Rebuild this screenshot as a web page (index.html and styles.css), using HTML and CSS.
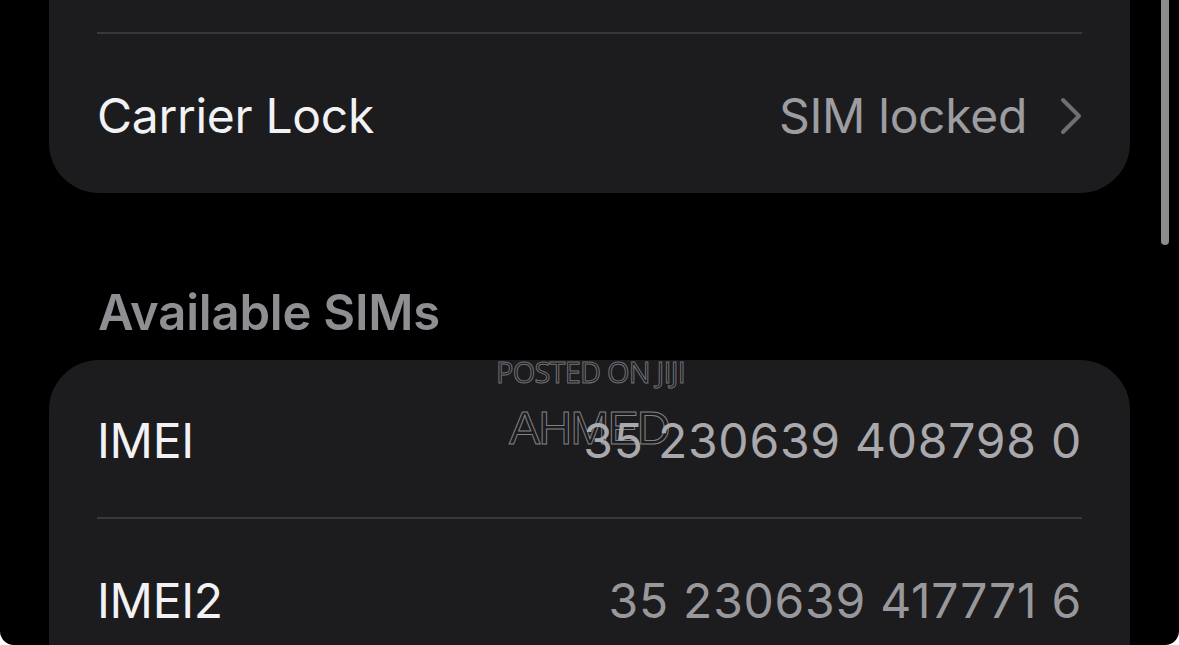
FILE: index.html
```html
<!DOCTYPE html>
<html>
<head>
<meta charset="utf-8">
<link rel="stylesheet" href="styles.css">
</head>
<body>
<div class="screen">
  <div class="card card-top">
    <div class="card-cut"></div>
    <div class="row">
      <span class="label">Carrier Lock</span>
      <span class="value value-link">SIM locked
        <svg class="chevron" width="22" height="38" viewBox="0 0 22 38"><polyline points="3,3 19,19 3,35" fill="none" stroke="#6f6f72" stroke-width="4" stroke-linecap="round" stroke-linejoin="round"/></svg>
      </span>
    </div>
  </div>
  <h2 class="section-title">Available SIMs</h2>
  <div class="card card-list">
    <div class="row row-first">
      <span class="label">IMEI</span>
      <span class="value value-num value-light">35 230639 408798 0</span>
    </div>
    <div class="row">
      <span class="label">IMEI2</span>
      <span class="value value-num">35 230639 417771 6</span>
    </div>
  </div>
  <div class="scrollbar"></div>
  <div class="watermark">
    <span class="wm-small">POSTED ON JIJI</span>
    <span class="wm-big">AHMED</span>
  </div>
</div>
</body>
</html>
```

FILE: styles.css
```css
html, body {
  margin: 0;
  padding: 0;
  background: #ffffff;
}

.screen {
  position: relative;
  width: 1179px;
  height: 645px;
  background: #000000;
  border-radius: 0 0 14px 14px;
  overflow: hidden;
  font-family: "Inter", "Liberation Sans", sans-serif;
  padding: 0 49px;
  box-sizing: border-box;
}

.card {
  background: #1c1c1e;
  width: 1081px;
}

.card-top {
  border-radius: 0 0 50px 50px;
}

.card-cut {
  height: 32px;
}

.card-list {
  border-radius: 50px 50px 0 0;
  height: 320px;
}

.row {
  margin: 0 48px;
  height: 161px;
  box-sizing: border-box;
  padding-top: 4px;
  border-top: 2px solid #38383a;
  display: flex;
  align-items: center;
  justify-content: space-between;
}

.row-first {
  border-top: none;
  height: 157px;
}

.label {
  color: #f2f2f4;
  font-size: 48px;
  letter-spacing: -0.3px;
}

.value {
  color: #98989c;
  font-size: 48px;
  letter-spacing: -0.3px;
  display: flex;
  align-items: center;
}

.value-num {
  letter-spacing: 0.75px;
}

.value-light {
  color: #a9a9ad;
}

.value-link {
  color: #9d9da1;
}

.chevron {
  margin-left: 33px;
  margin-right: 0;
}

.section-title {
  margin: 0;
  padding: 90px 0 0 49px;
  height: 77px;
  line-height: 60px;
  font-size: 49px;
  font-weight: 600;
  color: #8e8e93;
  letter-spacing: -0.2px;
}

.scrollbar {
  position: absolute;
  left: 1161px;
  top: -10px;
  width: 8px;
  height: 255px;
  border-radius: 4px;
  background: #8c8c8e;
}

.watermark {
  position: absolute;
  left: 496px;
  top: 357px;
  display: flex;
  flex-direction: column;
  align-items: flex-start;
  color: transparent;
}

.wm-small {
  font-family: "Open Sans", "Liberation Sans", sans-serif;
  font-size: 29px;
  letter-spacing: -0.8px;
  line-height: 30px;
  -webkit-text-stroke: 1px rgba(170, 170, 175, 0.6);
}

.wm-big {
  font-family: "Liberation Sans", sans-serif;
  margin-left: 13px;
  margin-top: 16px;
  font-size: 47px;
  line-height: 50px;
  letter-spacing: -2px;
  -webkit-text-stroke: 1px rgba(175, 175, 180, 0.7);
}
```
